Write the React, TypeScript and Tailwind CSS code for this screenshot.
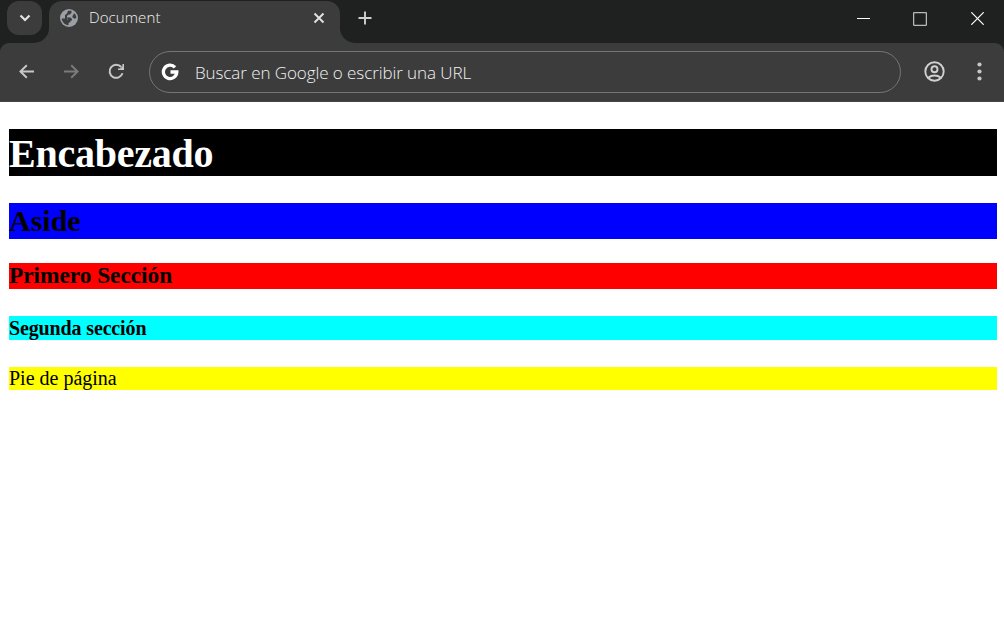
import React from "react";

function TabStrip() {
  return (
    <div className="flex h-[43px] bg-[#3c3c3c]">
      <div className="h-[43px] w-[49px] rounded-br-[15px] bg-[#1f2121] pl-[7px] pt-px">
        <button className="flex h-[34px] w-[35px] items-center justify-center rounded-[12px] bg-[#3c3c3c]">
          <svg width="12" height="8" viewBox="0 0 12 8" fill="none" stroke="#e3e3e3" strokeWidth="2.200">
            <path d="M1.500 1.500 6 6l4.500-4.500" />
          </svg>
        </button>
      </div>
      <div className="h-[20px] w-[291px] bg-[#1f2121] pt-px">
        <div className="flex h-[42px] rounded-t-[13px] bg-[#3c3c3c]">
          <svg className="ml-[10px] mt-[7px] shrink-0" width="20" height="20" viewBox="0 0 20 20">
            <circle cx="10" cy="10" r="9" fill="#9aa0a6" />
            <path
              fill="#3c3c3c"
              d="M9 2.800h3.500v2L11 6.500H9.500L8 8v1.500h3.500l1.500 1.500v1.500H11.500V14L9.500 15v2.200C5.800 17 3 14 2.700 10.500H7.500L9 12v-1.200H6V7L8 5.500z"
            />
            <path fill="#3c3c3c" d="M15.200 5.200c1.400 1.300 2.100 3 2.100 4.800l-1.500.8-2.300-1.300V8z" />
          </svg>
          <span className="ml-[10px] mt-[5px] w-[210px] font-['Open_Sans',sans-serif] text-[15px] font-light leading-[22px] tracking-[0.100px] text-[#f2f2f2]">
            Document
          </span>
          <svg className="mt-[11px] ml-[14px] shrink-0" width="12" height="12" viewBox="0 0 12 12" stroke="#e3e3e3" strokeWidth="1.900">
            <path d="m1.500 1.500 9 9m0-9-9 9" />
          </svg>
        </div>
      </div>
      <div className="flex h-[43px] flex-1 rounded-bl-[15px] bg-[#1f2121]">
        <svg className="ml-[18px] mt-[11px]" width="14" height="14" viewBox="0 0 14 14" stroke="#d0d0d0" strokeWidth="1.900">
          <path d="M7 .5v13M.5 7h13" />
        </svg>
        <div className="ml-auto flex pr-[20px] pt-[12px]">
          <svg width="13" height="14" viewBox="0 0 13 14" stroke="#fff">
            <path d="M0 6.500h13" />
          </svg>
          <svg className="ml-[43px]" width="14" height="14" viewBox="0 0 14 14" fill="none" stroke="#b8b8b8">
            <rect x=".6" y=".6" width="12.800" height="12.800" rx=".8" strokeWidth="1.300" />
          </svg>
          <svg className="ml-[44px]" width="13" height="13" viewBox="0 0 13 13" stroke="#fff" strokeWidth="1.200">
            <path d="m.3.3 12.400 12.400m0-12.400L.3 12.700" />
          </svg>
        </div>
      </div>
    </div>
  );
}

function Toolbar() {
  return (
    <div className="h-[59px] bg-[#1f2121]">
      <div className="flex h-[59px] rounded-t-[9px] border-b border-[#474747] bg-[#3c3c3c]">
        <svg className="ml-[19px] mt-[21px]" width="16" height="16" viewBox="0 0 16 16" fill="none" stroke="#c7c7c7" strokeWidth="1.900">
          <path d="M15 7.500H2M7.800 1.200 1.400 7.500l6.400 6.300" />
        </svg>
        <svg className="ml-[28px] mt-[21px]" width="16" height="16" viewBox="0 0 16 16" fill="none" stroke="#7b7b7b" strokeWidth="1.900">
          <path d="M1 7.500h13M8.200 1.200l6.400 6.300-6.400 6.300" />
        </svg>
        <svg className="ml-[29px] mt-[20px]" width="17" height="17" viewBox="0 0 17 17" fill="none" stroke="#c7c7c7" strokeWidth="2">
          <path d="M13.300 4A6.600 6.600 0 1 0 14.500 10.300" />
          <path d="M16 1v6H10V5.500h2.200L14.400 3.500V1z" fill="#c7c7c7" stroke="none" />
        </svg>
        <div className="ml-[24px] mt-[8px] flex h-[42px] w-[752px] rounded-full border-[1.500px] border-[#757575]">
          <svg className="ml-[11px] mt-[11px]" width="18" height="18" viewBox="0 0 18 18" fill="none" stroke="#fff" strokeWidth="3.300">
            <path d="M14 4.300A6.700 6.700 0 1 0 15.800 9H9.500" />
          </svg>
          <span className="ml-[16px] mt-[9px] whitespace-pre font-['Open_Sans',sans-serif] text-[17px] font-light leading-[24px] tracking-[-0.080px] text-[#f2f2f2]">
            Buscar en Google o escribir una URL
          </span>
        </div>
        <svg className="ml-[23px] mt-[18px]" width="21" height="21" viewBox="0 0 21 21" fill="none" stroke="#d0d0d0" strokeWidth="1.900">
          <circle cx="10.500" cy="10.500" r="9.200" />
          <circle cx="10.500" cy="8.300" r="3" />
          <path d="M4.200 16.700c3.600-3 9-3 12.600 0" />
        </svg>
        <svg className="ml-[32px] mt-[19px]" width="5" height="20" viewBox="0 0 5 20" fill="#c7c7c7">
          <circle cx="2.500" cy="2.500" r="2.100" />
          <circle cx="2.500" cy="9.500" r="2.100" />
          <circle cx="2.500" cy="16.500" r="2.100" />
        </svg>
      </div>
    </div>
  );
}

export default function App() {
  return (
    <div className="h-[621px] w-[1004px] overflow-hidden bg-white">
      <TabStrip />
      <Toolbar />
      <main className="flex flex-col whitespace-nowrap pl-[9px] pr-[7px] pt-[27px] font-['Liberation_Serif',serif] text-black">
        <h1 className="h-[47px] bg-black text-[40px] font-bold leading-[49px] tracking-[-0.250px] text-white">Encabezado</h1>
        <h2 className="mt-[27px] h-[36px] bg-[#0000ff] text-[30px] font-bold leading-[36px]">Aside</h2>
        <h3 className="mt-[24px] h-[26px] bg-[#ff0000] text-[23.400px] font-bold leading-[25px] tracking-[-0.050px]">Primero Sección</h3>
        <h4 className="mt-[27px] h-[24px] bg-[#00ffff] text-[20px] font-bold leading-[24px] tracking-[-0.140px]">Segunda sección</h4>
        <footer className="mt-[27px] h-[23px] bg-[#ffff00] text-[20px] leading-[22px]">Pie de página</footer>
      </main>
    </div>
  );
}
